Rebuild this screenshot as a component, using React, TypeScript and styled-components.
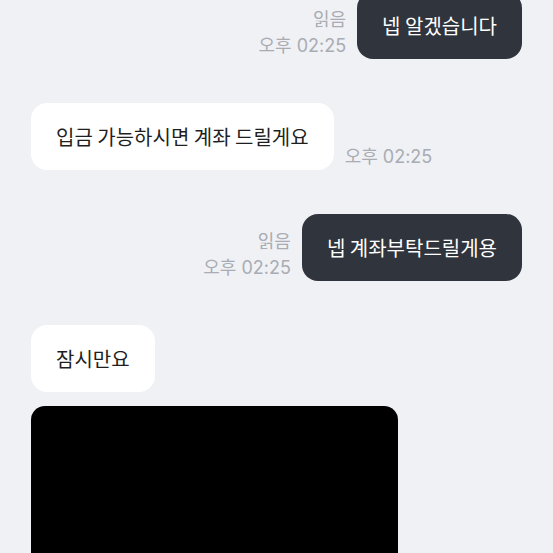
import styled, { createGlobalStyle } from "styled-components";

const GlobalStyle = createGlobalStyle`
  html, body {
    margin: 0;
    padding: 0;
    background: #eff1f5;
    overflow: hidden;
  }
`;

type Msg = {
  mine: boolean;
  text: string;
  time: string;
  read?: boolean;
};

const messages: Msg[] = [
  { mine: true, text: "넵 알겠습니다", time: "오후 02:25", read: true },
  { mine: false, text: "입금 가능하시면 계좌 드릴게요", time: "오후 02:25" },
  { mine: true, text: "넵 계좌부탁드릴게용", time: "오후 02:25", read: true },
];

export default function App() {
  return (
    <>
      <GlobalStyle />
      <Chat>
        {messages.map((m, i) => (
          <Row key={i} $mine={m.mine}>
            <Bubble $mine={m.mine}>{m.text}</Bubble>
            <Meta $mine={m.mine}>
              {m.read && <span>읽음</span>}
              <span>{m.time}</span>
            </Meta>
          </Row>
        ))}
        <Group>
          <Row $mine={false}>
            <Bubble $mine={false}>잠시만요</Bubble>
          </Row>
          <Photo />
        </Group>
      </Chat>
    </>
  );
}

const Chat = styled.div`
  display: flex;
  flex-direction: column;
  gap: 44px;
  padding: 0 31px;
  margin-top: -8px;
  font-family: "Noto Sans CJK KR", "Noto Sans", sans-serif;
`;

const Row = styled.div<{ $mine: boolean }>`
  display: flex;
  flex-direction: ${(p) => (p.$mine ? "row-reverse" : "row")};
  align-items: flex-end;
  gap: 11px;
`;

const Bubble = styled.div<{ $mine: boolean }>`
  height: 67px;
  box-sizing: border-box;
  display: flex;
  align-items: center;
  padding: 0 25px;
  border-radius: 16px;
  font-size: 20px;
  font-weight: 400;
  background: ${(p) => (p.$mine ? "#2f343d" : "#ffffff")};
  color: ${(p) => (p.$mine ? "#ffffff" : "#1f1f1f")};
  white-space: nowrap;
`;

const Meta = styled.div<{ $mine: boolean }>`
  display: flex;
  flex-direction: column;
  align-items: ${(p) => (p.$mine ? "flex-end" : "flex-start")};
  font-family: Inter, "Noto Sans CJK KR", sans-serif;
  font-size: 18px;
  font-weight: 400;
  line-height: 26px;
  color: #a9acb2;
`;

const Group = styled.div`
  display: flex;
  flex-direction: column;
  gap: 14px;
`;

const Photo = styled.div`
  width: 367px;
  height: 200px;
  background: #000;
  border-radius: 14px;
`;
